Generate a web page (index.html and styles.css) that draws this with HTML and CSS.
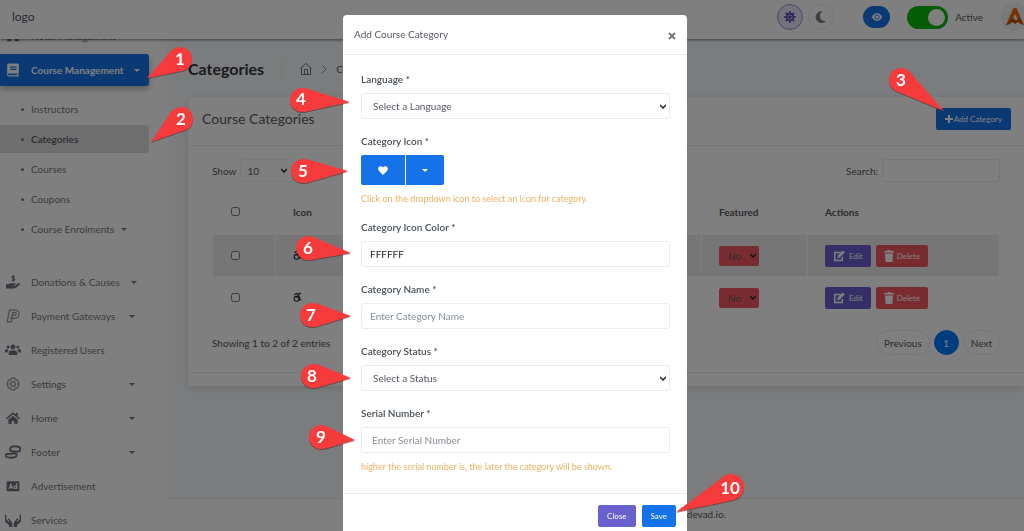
FILE: index.html
```html
<!DOCTYPE html>
<html lang="en">
<head>
    <meta charset="UTF-8">
    <meta name="viewport" content="width=device-width, initial-scale=1.0">
    <title>Course Categories</title>
    <link rel="stylesheet" href="styles.css">
</head>
<body>

<!-- Top bar -->
<header class="topbar">
    <a href="#" class="logo">logo</a>
    <div class="topbar-tools">
        <button class="round-btn round-btn-on" aria-label="Light mode">
            <svg width="12" height="12" viewBox="0 0 24 24" fill="none" stroke="#4b3fb0" stroke-width="3"><circle cx="12" cy="12" r="6.5"/><circle cx="12" cy="12" r="2"/><path d="M12 0v5M12 19v5M0 12h5M19 12h5M3.500 3.500l4 4M16.500 16.500l4 4M20.500 3.500l-4 4M7.500 16.500l-4 4"/></svg>
        </button>
        <button class="round-btn" aria-label="Dark mode">
            <svg width="12" height="12" viewBox="0 0 24 24" fill="#7d7d88"><path d="M15 1A11.500 11.500 0 1 0 22 19.500 10 10 0 0 1 15 1z"/></svg>
        </button>
        <button class="view-btn" aria-label="View website">
            <svg width="10" height="8" viewBox="0 0 24 18"><path d="M12 0C6 0 2 4 0 9c2 5 6 9 12 9s10-4 12-9c-2-5-6-9-12-9z" fill="#fff"/><circle cx="12" cy="9" r="6" fill="#1572e8"/><circle cx="12" cy="9" r="4" fill="#fff"/></svg>
        </button>
        <input type="checkbox" id="site-status" class="switch" checked>
        <label for="site-status" class="switch-label">Active</label>
        <a href="#" class="avatar" aria-label="Profile">
            <svg width="20" height="20" viewBox="0 0 40 40"><path d="M2 36L17 2h6l15 34-9-3-9-19-9 20z" fill="#f0640f"/><path d="M0 37l16-15 6 5 5-5 11 14-12-6-6 4-5-4z" fill="#c24a00"/></svg>
        </a>
    </div>
</header>

<div class="wrapper">
    <!-- Sidebar -->
    <aside class="sidebar">
        <nav class="nav">
            <a href="#" class="nav-item">
                <svg class="nav-icon" viewBox="0 0 24 24"><path d="M2 4h8v7h4V4h8v17h-7v-5H9v5H2z"/></svg>
                <span>Hotel Management</span>
            </a>
            <a href="#" class="nav-item nav-active">
                <svg class="nav-icon" viewBox="0 0 24 24"><path d="M5 1h16a1 1 0 0 1 1 1v15l-1 1v3h1v2H5a3 3 0 0 1-3-3V4a3 3 0 0 1 3-3zm2 5v2h11V6zm0 4v2h11v-2zM5 18a1.500 1.500 0 0 0 0 3h14v-3z" fill-rule="evenodd"/></svg>
                <span>Course Management</span>
                <i class="caret"></i>
            </a>
            <div class="subnav">
                <a href="#" class="sub-item">Instructors</a>
                <a href="#" class="sub-item sub-active">Categories</a>
                <a href="#" class="sub-item">Courses</a>
                <a href="#" class="sub-item">Coupons</a>
                <a href="#" class="sub-item">Course Enrolments <i class="caret"></i></a>
            </div>
            <a href="#" class="nav-item">
                <svg class="nav-icon" viewBox="0 0 24 24"><path d="M0 16h4l3-2h8c2 0 2 3 0 3h-4v1h5l5-4c2-1 4 1 2 3l-6 5c-1 1-2 1-3 1H0z"/><path d="M15.500 2.500h-3.500c-2.500 0-2.500 3 0 3h1c2.500 0 2.500 3.500 0 3.500H9.500M12.500 0v11.500" fill="none" stroke="#6c757d" stroke-width="2"/></svg>
                <span>Donations &amp; Causes</span>
                <i class="caret"></i>
            </a>
            <a href="#" class="nav-item">
                <svg class="nav-icon nav-icon-line" viewBox="0 0 24 24"><path d="M6 2h10c9 0 8 14-1 14h-4l-2 6H2L6 2zM10 12l2-6h3c4 0 3 5-1 5h-3l-3 6" /></svg>
                <span>Payment Gateways</span>
                <i class="caret"></i>
            </a>
            <a href="#" class="nav-item">
                <svg class="nav-icon nav-icon-wide" viewBox="-1 2 26 20"><circle cx="12" cy="7" r="4"/><circle cx="4" cy="7" r="2.500"/><circle cx="20" cy="7" r="2.500"/><path d="M5 20v-4c0-5 14-5 14 0v4zM-1 16v-3c0-3 5-3 6-1-1 1-2 2-2 4zM25 16v-3c0-3-5-3-6-1 1 1 2 2 2 4z"/></svg>
                <span>Registered Users</span>
            </a>
            <a href="#" class="nav-item">
                <svg class="nav-icon nav-icon-line" viewBox="0 0 24 24"><path d="M9 2h6l1 3 3 0 3 5-2 2 2 2-3 5-3 0-1 3H9l-1-3-3 0-3-5 2-2-2-2 3-5 3 0z"/><circle cx="12" cy="12" r="4"/></svg>
                <span>Settings</span>
                <i class="caret"></i>
            </a>
            <a href="#" class="nav-item">
                <svg class="nav-icon" viewBox="0 0 24 24"><path d="M12 2l5 4V3h3v6l4 3-1.500 2L12 5.500 1.500 14 0 12z"/><path d="M12 8l8 6.500V22h-6v-5h-4v5H4v-7.500z"/></svg>
                <span>Home</span>
                <i class="caret"></i>
            </a>
            <a href="#" class="nav-item">
                <svg class="nav-icon nav-icon-bold nav-icon-wide" viewBox="0 1 25 22"><path d="M8 8c0-3 3-5 7-5 5 0 9 1 9 4 0 4-3 5-6 4-3 0-4 0-6 0-2 0-4-1-4-3zM1 18c0-2 3-4 6-3 3 1 4-1 7-1 3 0 5 1 4 4-1 2-4 3-8 3-5 0-9 0-9-3z"/></svg>
                <span>Footer</span>
                <i class="caret"></i>
            </a>
            <a href="#" class="nav-item">
                <svg class="nav-icon" viewBox="0 0 24 24"><path d="M3 4h18a2 2 0 0 1 2 2v13a2 2 0 0 1-2 2H3a2 2 0 0 1-2-2V6a2 2 0 0 1 2-2z"/><path d="M5 17l3.500-8L12 17M6.500 14.500h4M18.500 7v10" fill="none" stroke="#fff" stroke-width="2"/><circle cx="16" cy="14" r="2.200" fill="none" stroke="#fff" stroke-width="2"/></svg>
                <span>Advertisement</span>
            </a>
            <a href="#" class="nav-item">
                <svg class="nav-icon nav-icon-wide" viewBox="0 2 24 20"><path d="M0 4c1-1 2 0 2 1v6l4 4c1 0 1-1 0-2L4 11c1-2 2-1 3 0l3 4c1 1 1 2 1 3v5H6v-3l-5-5c-1-1-1-1-1-3zM24 4c-1-1-2 0-2 1v6l-4 4c-1 0-1-1 0-2l2-2c-1-2-2-1-3 0l-3 4c-1 1-1 2-1 3v5h5v-3l5-5c1-1 1-1 1-3z"/></svg>
                <span>Services</span>
            </a>
        </nav>
    </aside>

    <!-- Page content -->
    <div class="main">
        <main class="content">
            <div class="page-head">
                <h1>Categories</h1>
                <a href="#" class="crumb-home" aria-label="Dashboard">
                    <svg width="12" height="12" viewBox="0 0 24 24" fill="none" stroke="#6c757d" stroke-width="2"><path d="M1 11L12 1l11 10M3 9v14h18V9M9 23V13h6v10"/></svg>
                </a>
                <svg width="6" height="10" viewBox="0 0 6 10" fill="none" stroke="#8d9498"><path d="M1 1l4 4-4 4"/></svg>
                <a href="#" class="crumb">Course</a>
            </div>

            <section class="card">
                <div class="card-head">
                    <h2>Course Categories</h2>
                    <button class="btn btn-primary"><svg width="8" height="8" viewBox="0 0 8 8" stroke="#fff" stroke-width="2"><path d="M4 0v8M0 4h8"/></svg>Add Category</button>
                </div>
                <div class="card-body">
                    <div class="table-bar">
                        <div class="table-length">
                            <label for="length">Show</label>
                            <select id="length" class="length-select"><option>10</option><option>25</option></select>
                        </div>
                        <div class="table-search">
                            <label for="search">Search:</label>
                            <input type="text" id="search" class="search-input">
                        </div>
                    </div>
                    <table class="table">
                        <thead>
                            <tr>
                                <th class="col-check"><input type="checkbox" aria-label="Select all"></th>
                                <th>Icon</th>
                                <th class="col-featured">Featured</th>
                                <th class="col-actions">Actions</th>
                            </tr>
                        </thead>
                        <tbody>
                            <tr class="odd">
                                <td class="col-check"><input type="checkbox" aria-label="Select row 1"></td>
                                <td><svg width="9" height="10" viewBox="0 0 20 22" fill="none" stroke="#212529" stroke-width="2.500"><circle cx="8" cy="15" r="5.500"/><path d="M3 6l5-3 5 3-4 5h6l-1 6h5"/><circle cx="15" cy="3" r="1"/></svg></td>
                                <td><select class="featured-select" aria-label="Featured"><option>No</option><option>Yes</option></select></td>
                                <td>
                                    <div class="actions">
                                        <button class="btn btn-secondary btn-row"><svg width="13" height="12" viewBox="0 0 25 24"><path d="M15 5H3v16h15v-7" fill="none" stroke="#fff" stroke-width="3"/><path d="M8 17l1-6L19 1l4 4-10 10z" fill="#fff"/></svg>Edit</button>
                                        <button class="btn btn-danger btn-row"><svg width="10" height="12" viewBox="0 0 20 24" fill="#fff"><path d="M0 2h6l1-2h6l1 2h6v3H0zM2 7h16l-1 17H3z"/></svg>Delete</button>
                                    </div>
                                </td>
                            </tr>
                            <tr>
                                <td class="col-check"><input type="checkbox" aria-label="Select row 2"></td>
                                <td><svg width="9" height="10" viewBox="0 0 20 22" fill="none" stroke="#212529" stroke-width="2.500"><circle cx="8" cy="15" r="5.500"/><path d="M3 6l5-3 5 3-4 5h6l-1 6h5"/><circle cx="15" cy="3" r="1"/></svg></td>
                                <td><select class="featured-select" aria-label="Featured"><option>No</option><option>Yes</option></select></td>
                                <td>
                                    <div class="actions">
                                        <button class="btn btn-secondary btn-row"><svg width="13" height="12" viewBox="0 0 25 24"><path d="M15 5H3v16h15v-7" fill="none" stroke="#fff" stroke-width="3"/><path d="M8 17l1-6L19 1l4 4-10 10z" fill="#fff"/></svg>Edit</button>
                                        <button class="btn btn-danger btn-row"><svg width="10" height="12" viewBox="0 0 20 24" fill="#fff"><path d="M0 2h6l1-2h6l1 2h6v3H0zM2 7h16l-1 17H3z"/></svg>Delete</button>
                                    </div>
                                </td>
                            </tr>
                        </tbody>
                    </table>
                    <div class="table-foot">
                        <span>Showing 1 to 2 of 2 entries</span>
                        <div class="pages">
                            <button class="page">Previous</button>
                            <button class="page page-on">1</button>
                            <button class="page">Next</button>
                        </div>
                    </div>
                </div>
                <div class="card-foot"></div>
            </section>
        </main>
        <footer class="footer">devad.io.</footer>
    </div>
</div>

<!-- Add category modal -->
<div class="backdrop">
    <form class="modal" role="dialog" aria-labelledby="modal-title">
        <div class="modal-head">
            <h3 id="modal-title">Add Course Category</h3>
            <button type="button" class="close" aria-label="Close dialog">
                <svg width="8" height="8" viewBox="0 0 8 8" stroke="#777" stroke-width="2"><path d="M1 1l6 6M7 1L1 7"/></svg>
            </button>
        </div>
        <div class="modal-body">
            <div class="group">
                <label for="language">Language *</label>
                <select id="language" class="field"><option>Select a Language</option></select>
            </div>
            <div class="group">
                <label for="icon-btn">Category Icon *</label>
                <div class="icon-picker">
                    <button type="button" id="icon-btn" class="pick pick-icon">
                        <svg width="10" height="9" viewBox="0 0 20 18" fill="#fff"><path d="M10 18L2 10C-4 2 6-3 10 3c4-6 14-1 8 7z"/></svg>
                    </button>
                    <button type="button" class="pick pick-drop" aria-label="Choose icon"><i class="caret"></i></button>
                </div>
                <p class="hint">Click on the dropdown icon to select an icon for category.</p>
            </div>
            <div class="group">
                <label for="color">Category Icon Color *</label>
                <input type="text" id="color" class="field" value="FFFFFF">
            </div>
            <div class="group">
                <label for="name">Category Name *</label>
                <input type="text" id="name" class="field" placeholder="Enter Category Name">
            </div>
            <div class="group">
                <label for="status">Category Status *</label>
                <select id="status" class="field"><option>Select a Status</option></select>
            </div>
            <div class="group">
                <label for="serial">Serial Number *</label>
                <input type="text" id="serial" class="field field-number" placeholder="Enter Serial Number">
                <p class="hint">higher the serial number is, the later the category will be shown.</p>
            </div>
        </div>
        <div class="modal-foot">
            <button type="button" class="btn btn-secondary">Close</button>
            <button type="button" class="btn btn-primary">Save</button>
        </div>
    </form>
</div>

<!-- Step markers -->
<svg class="steps" width="1024" height="531" viewBox="0 0 1024 531">
    <g class="step"><path d="M147 78L171 51L182 71z"/><circle cx="180" cy="59" r="12"/><text x="180" y="65">1</text></g>
    <g class="step"><path d="M151 142L171 112L185 130z"/><circle cx="181" cy="119" r="12"/><text x="181" y="125">2</text></g>
    <g class="step"><path d="M944 111L896 91L910 72z"/><circle cx="901" cy="80" r="12"/><text x="901" y="86">3</text></g>
    <g class="step"><path d="M350 102L304 112L305 88z"/><circle cx="302" cy="100" r="12"/><text x="301" y="105">4</text></g>
    <g class="step"><path d="M348 171L306 183L306 159z"/><circle cx="303" cy="171" r="12"/><text x="303" y="177">5</text></g>
    <g class="step"><path d="M351 253L310 260L313 237z"/><circle cx="308" cy="248" r="12"/><text x="308" y="254">6</text></g>
    <g class="step"><path d="M351 316L315 327L316 303z"/><circle cx="312" cy="315" r="12"/><text x="311" y="321">7</text></g>
    <g class="step"><path d="M351 378L316 388L317 364z"/><circle cx="313" cy="376" r="12"/><text x="312" y="382">8</text></g>
    <g class="step"><path d="M355 440L324 449L326 426z"/><circle cx="321" cy="437" r="12"/><text x="321" y="443">9</text></g>
    <g class="step"><path d="M676 512L723 477L734 500z"/><circle cx="731" cy="487" r="13"/><text x="730" y="494">10</text></g>
</svg>

</body>
</html>
```
FILE: styles.css
```css
* {
    box-sizing: border-box;
}
body {
    margin: 0;
    height: 100vh;
    display: flex;
    flex-direction: column;
    overflow: hidden;
    font-family: Lato, "Liberation Sans", sans-serif;
    font-size: 10px;
    line-height: 14px;
    color: #575962;
    background: #fff;
}
h1, h2, h3, p {
    margin: 0;
}
a {
    color: inherit;
    text-decoration: none;
}
button, input, select {
    font: inherit;
    color: inherit;
    margin: 0;
}
button {
    padding: 0;
    border: 0;
    display: inline-flex;
    align-items: center;
    justify-content: center;
}
select {
    appearance: none;
    background: #fff url("data:image/svg+xml,%3Csvg xmlns='http://www.w3.org/2000/svg' width='6' height='5' viewBox='0 0 6 5'%3E%3Cpath d='M0 1l3 3 3-3' fill='none' stroke='%23222' stroke-width='1.500'/%3E%3C/svg%3E") no-repeat right 3px center;
}

/* top bar */
.topbar {
    position: relative;
    flex: none;
    display: flex;
    align-items: center;
    justify-content: space-between;
    height: 39px;
    padding: 0 0 5px 12px;
    background: #fff;
    box-shadow: 0 1px 3px rgba(0, 0, 0, 0.5);
}
.logo {
    font-size: 12px;
}
.topbar-tools {
    display: flex;
    align-items: center;
    margin-right: -5px;
}
.round-btn {
    width: 26px;
    height: 26px;
    margin-right: 5px;
    border: 1px solid #eee;
    border-radius: 50%;
    background: #fff;
}
.round-btn-on {
    border-color: #9a86e0;
    background: #e8e4f6;
}
.view-btn {
    width: 27px;
    height: 22px;
    margin: 0 17px 0 24px;
    border-radius: 11px;
    background: #1572e8;
}
.switch {
    appearance: none;
    display: flex;
    justify-content: flex-end;
    width: 41px;
    height: 23px;
    padding: 3px;
    border-radius: 12px;
    background: #08b808;
}
.switch::before {
    content: "";
    width: 17px;
    height: 17px;
    border-radius: 50%;
    background: #fff;
}
.switch-label {
    margin: 0 18px 0 7px;
}
.avatar {
    display: flex;
    align-items: center;
    justify-content: center;
    width: 28px;
    height: 28px;
    border-radius: 50%;
    background: #f0f2f5;
}

.wrapper {
    flex: 1;
    min-height: 0;
    display: flex;
}

/* sidebar */
.sidebar {
    flex: none;
    width: 167px;
    overflow: hidden;
    background: #fff;
    box-shadow: 1px 0 4px rgba(69, 65, 78, 0.1);
}
.nav {
    margin-top: -20px;
}
.nav-item {
    display: flex;
    align-items: center;
    gap: 11px;
    width: 149px;
    height: 34px;
    padding-left: 6px;
    white-space: nowrap;
    color: #75797e;
}
.nav-item .caret {
    margin: 0 14px 0 auto;
}
.nav-icon {
    flex: none;
    width: 14px;
    height: 14px;
    fill: #6c757d;
}
.nav-icon-wide {
    width: 16px;
    margin: 0 -1px;
}
.nav-icon-line {
    fill: none;
    stroke: #8d9498;
    stroke-width: 2;
}
.nav-icon-bold {
    fill: none;
    stroke: #6c757d;
    stroke-width: 3;
}
.nav-active {
    height: 32px;
    margin-top: 1px;
    border-radius: 0 3px 3px 0;
    background: #1572e8;
    color: #fff;
    font-weight: 700;
    box-shadow: 0 3px 6px rgba(0, 0, 0, 0.3);
}
.nav-active .nav-icon {
    fill: #fff;
}
.caret {
    flex: none;
    display: inline-block;
    border: 3px solid transparent;
    border-top-color: currentColor;
    border-bottom: 0;
}
.subnav {
    display: flex;
    flex-direction: column;
    gap: 2px;
    margin: 9px 0 22px;
}
.sub-item {
    display: flex;
    align-items: center;
    width: 149px;
    height: 28px;
    padding-left: 21px;
    color: #75797e;
}
.sub-item::before {
    content: "";
    width: 3px;
    height: 3px;
    margin-right: 7px;
    border-radius: 50%;
    background: #75797e;
}
.sub-item .caret {
    margin-left: 7px;
}
.sub-active {
    background: #dcdcdc;
    border-radius: 0 3px 3px 0;
    color: #575962;
    font-weight: 600;
}

/* page */
.main {
    flex: 1;
    display: flex;
    flex-direction: column;
    background: #f6f9fc;
}
.content {
    flex: 1;
    padding: 20px 0 0 21px;
}
.page-head {
    display: flex;
    align-items: center;
    gap: 9px;
    height: 20px;
}
.page-head h1 {
    font-size: 16px;
    line-height: 20px;
    font-weight: 700;
    color: #33353c;
    padding-right: 17px;
    border-right: 1px solid #eee;
}
.crumb-home {
    display: flex;
    padding-left: 9px;
}
.card {
    margin-top: 18px;
    border-radius: 4px 0 0 4px;
    background: #fff;
    box-shadow: 0 2px 8px rgba(69, 65, 78, 0.15);
}
.card-head {
    display: flex;
    align-items: center;
    justify-content: space-between;
    height: 49px;
    padding: 0 13px 5px 14px;
    border-bottom: 1px solid #ebecec;
}
.card-head h2 {
    font-size: 14px;
    line-height: 18px;
    font-weight: 400;
}
.card-body {
    padding: 13px 24px 17px;
}
.card-foot {
    height: 14px;
    border-top: 1px solid #ebecec;
}
.btn {
    gap: 1px;
    height: 22px;
    padding: 0 9px;
    border-radius: 2px;
    color: #fff;
    font-size: 8px;
}
.btn-primary {
    background: #1572e8;
}
.btn-secondary {
    background: #6861ce;
}
.btn-danger {
    background: #f25961;
}
.btn-row {
    gap: 3px;
    padding: 0 8px;
}
.table-bar, .table-foot {
    display: flex;
    align-items: center;
    justify-content: space-between;
}
.table-length, .table-search {
    display: flex;
    align-items: center;
    gap: 4px;
}
.length-select {
    width: 54px;
    height: 23px;
    padding-left: 6px;
    border: 1px solid #f3f3f3;
    border-radius: 3px;
    background-position: right 6px center;
}
.search-input {
    width: 118px;
    height: 23px;
    border: 1px solid #ebedf2;
    border-radius: 3px;
    background: #fff;
}
.table {
    width: 100%;
    margin-top: 6px;
    border-spacing: 1px;
    table-layout: fixed;
}
.table th {
    height: 45px;
    padding: 0 17px;
    text-align: left;
    font-weight: 700;
}
.table td {
    height: 41px;
    padding: 0 17px;
}
.table .odd td {
    background: #ededed;
}
.table input {
    display: block;
    width: 9px;
    height: 9px;
    margin-left: 1px;
}
.col-check {
    width: 62px;
}
.table .col-featured {
    width: 105px;
}
.table .col-actions {
    width: 191px;
}
.featured-select {
    display: block;
    width: 40px;
    height: 20px;
    padding-left: 9px;
    border: 0;
    border-radius: 2px;
    background-color: #f25961;
}
.actions {
    display: flex;
    gap: 5px;
}
.table-foot {
    margin-top: 11px;
}
.pages {
    display: flex;
    gap: 4px;
}
.page {
    height: 25px;
    padding: 0 7px;
    border: 1px solid #eee;
    border-radius: 13px;
    background: #fff;
}
.page-on {
    width: 25px;
    padding: 0;
    border-color: #007bff;
    background: #007bff;
    color: #fff;
}
.footer {
    height: 33px;
    padding: 8px 298px 0 0;
    border-top: 1px solid #eee;
    background: #fff;
    text-align: right;
}

/* modal */
.backdrop {
    position: fixed;
    inset: 0;
    display: flex;
    align-items: flex-start;
    justify-content: center;
    padding: 15px 0 0 6px;
    overflow: hidden;
    background: rgba(0, 0, 0, 0.5);
}
.modal {
    width: 344px;
    border-radius: 4px;
    background: #fff;
}
.modal-head {
    display: flex;
    justify-content: space-between;
    height: 40px;
    padding: 12px 11px 0;
    border-bottom: 1px solid #ebecec;
}
.modal-head h3 {
    font-size: 10px;
    line-height: 14px;
    font-weight: 400;
}
.close {
    height: 18px;
    background: none;
}
.modal-body {
    padding: 17px 17px 5px 18px;
}
.group {
    margin-bottom: 15px;
}
.group label {
    display: block;
    margin-bottom: 7px;
    font-weight: 600;
    color: #495057;
}
.field {
    display: block;
    width: 100%;
    height: 26px;
    padding: 0 8px;
    border: 1px solid #ebedf2;
    border-radius: 2px;
    background-color: #fff;
    color: #212529;
}
select.field {
    padding: 0 0 0 11px;
    color: #575962;
}
.field-number {
    padding-left: 10px;
}
.field::placeholder {
    color: #868e96;
}
.icon-picker {
    display: flex;
    gap: 1px;
}
.pick {
    height: 30px;
    background: #1572e8;
    color: #fff;
}
.pick-icon {
    width: 44px;
    border-radius: 2px 0 0 2px;
}
.pick-drop {
    width: 38px;
    border-radius: 0 2px 2px 0;
}
.hint {
    margin-top: 8px;
    font-size: 9px;
    line-height: 12px;
    color: #ecb25f;
}
.modal-foot {
    display: flex;
    justify-content: flex-end;
    gap: 6px;
    padding: 11px 11px 15px;
    border-top: 1px solid #ebecec;
}

/* step markers lie over the whole screen */
.steps {
    position: absolute;
    top: 0;
    left: 0;
    pointer-events: none;
}
.step {
    fill: #f53b3b;
    filter: drop-shadow(0 1px 0 rgba(90, 20, 20, 0.5));
}
.step text {
    fill: #fff;
    font-size: 17px;
    font-weight: 700;
    text-anchor: middle;
}
```
